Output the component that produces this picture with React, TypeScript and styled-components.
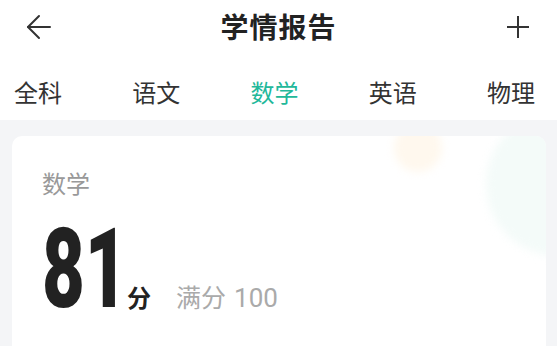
import React from "react";
import styled, { createGlobalStyle } from "styled-components";

const Global = createGlobalStyle`
  html, body { margin: 0; padding: 0; background: #f4f5f7; }
  body { font-family: "Noto Sans CJK SC", "Noto Sans", sans-serif; overflow: hidden; }
  * { box-sizing: border-box; }
`;

const Page = styled.div`
  width: 557px;
  height: 346px;
  display: flex;
  flex-direction: column;
  background: #f4f5f7;
  overflow: hidden;
`;

const Top = styled.div`
  background: #ffffff;
  display: flex;
  flex-direction: column;
`;

const Header = styled.div`
  height: 56px;
  display: flex;
  align-items: center;
  justify-content: space-between;
  padding: 0 24px 0 24px;
  position: relative;
`;

const IconButton = styled.div`
  width: 30px;
  height: 30px;
  display: flex;
  align-items: center;
  justify-content: center;
  margin-top: -3px;
`;

const Title = styled.div`
  position: absolute;
  left: 0;
  right: 0;
  top: 0;
  height: 56px;
  display: flex;
  align-items: center;
  justify-content: center;
  font-size: 28px;
  font-weight: 700;
  color: #222;
  letter-spacing: 1px;
  margin-top: -2px;
  pointer-events: none;
`;

const Tabs = styled.div`
  height: 64px;
  padding: 10px 22px 4px 14px;
  display: flex;
  justify-content: space-between;
  align-items: center;
`;

const Tab = styled.div<{ $active?: boolean }>`
  height: 50px;
  display: flex;
  align-items: center;
  font-size: 24px;
  color: ${(p) => (p.$active ? "#22b89a" : "#333")};
`;

const Body = styled.div`
  flex: 1;
  padding: 16px 11px 0 12px;
`;

const Card = styled.div`
  position: relative;
  overflow: hidden;
  background: #ffffff;
  border-radius: 10px;
  height: 260px;
  padding: 32px 30px 0 30px;
`;

const Blob = styled.div<{ $color: string; $size: number }>`
  position: absolute;
  width: ${(p) => p.$size}px;
  height: ${(p) => p.$size}px;
  border-radius: 50%;
  background: ${(p) => p.$color};
  filter: blur(4px);
`;

const OrangeBlob = styled(Blob)`
  left: 382px;
  top: -12px;
`;

const TealBlob = styled(Blob)`
  left: 474px;
  top: -24px;
`;

const Label = styled.div`
  position: relative;
  font-size: 24px;
  line-height: 29px;
  color: #999;
`;

const ScoreRow = styled.div`
  position: relative;
  margin-top: 16px;
  display: flex;
  align-items: baseline;
`;

const NumberBox = styled.div`
  width: 85px;
  font-family: Roboto, "Liberation Sans", sans-serif;
  font-weight: 900;
  font-size: 112px;
  line-height: 1;
  color: #222;
`;

const NumberText = styled.span`
  display: inline-block;
  transform: scaleX(0.66);
  transform-origin: left center;
`;

const Unit = styled.span`
  font-size: 24px;
  font-weight: 700;
  color: #222;
`;

const Full = styled.span`
  margin-left: 25px;
  font-size: 25px;
  color: #aaa;
`;

const FullNum = styled.span`
  font-family: Roboto, "Liberation Sans", sans-serif;
  font-size: 26px;
  margin-left: 8px;
`;

const tabs = ["全科", "语文", "数学", "英语", "物理"];

export default function App() {
  return (
    <Page>
      <Global />
      <Top>
        <Header>
          <IconButton>
            <svg width="26" height="26" viewBox="0 0 26 26" fill="none" stroke="#333" strokeWidth="2" strokeLinecap="round" strokeLinejoin="round">
              <path d="M24 13H2" />
              <path d="M13 2L2 13L13 24" />
            </svg>
          </IconButton>
          <Title>学情报告</Title>
          <IconButton>
            <svg width="24" height="24" viewBox="0 0 24 24" fill="none" stroke="#333" strokeWidth="2">
              <path d="M12 1V23" />
              <path d="M1 12H23" />
            </svg>
          </IconButton>
        </Header>
        <Tabs>
          {tabs.map((t) => (
            <Tab key={t} $active={t === "数学"}>
              {t}
            </Tab>
          ))}
        </Tabs>
      </Top>
      <Body>
        <Card>
          <OrangeBlob $color="#fff8ee" $size={48} />
          <TealBlob $color="#f4fbf9" $size={144} />
          <Label>数学</Label>
          <ScoreRow>
            <NumberBox>
              <NumberText>81</NumberText>
            </NumberBox>
            <Unit>分</Unit>
            <Full>
              满分<FullNum>100</FullNum>
            </Full>
          </ScoreRow>
        </Card>
      </Body>
    </Page>
  );
}
